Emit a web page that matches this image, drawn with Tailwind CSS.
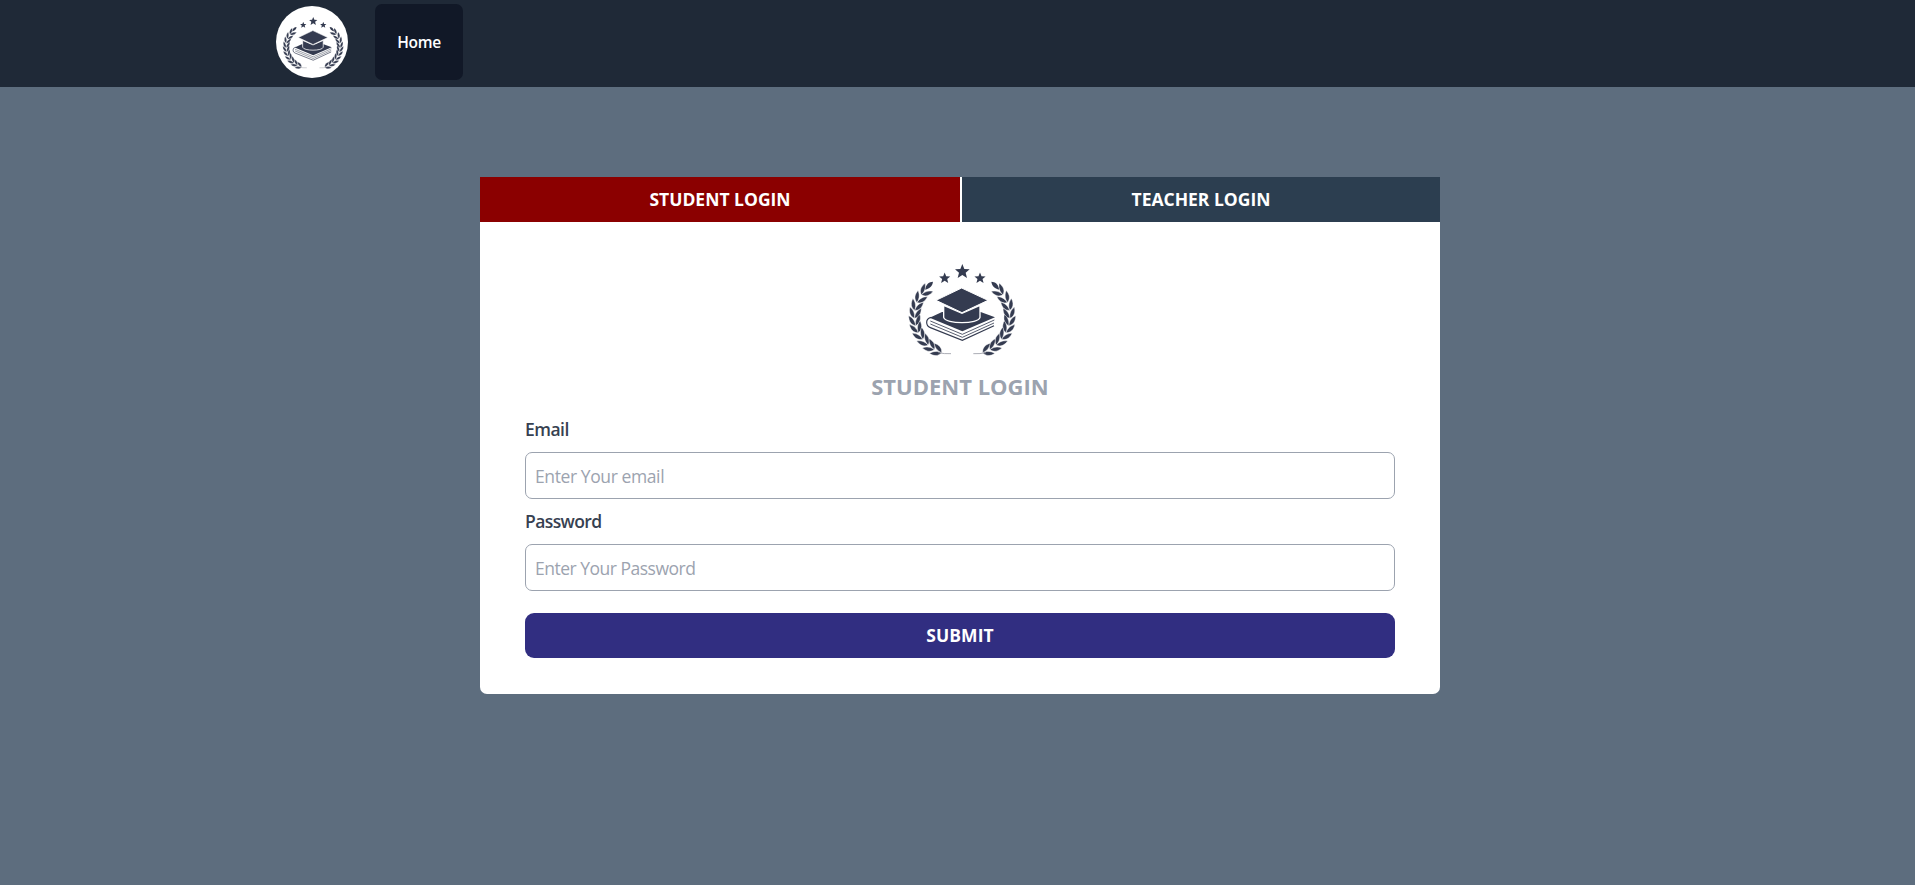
<!DOCTYPE html>
<html lang="en">
<head>
<meta charset="utf-8">
<title>Student Login</title>
<script src="https://cdn.jsdelivr.net/npm/@tailwindcss/browser@4"></script>
</head>
<body class="h-screen overflow-hidden bg-[#5d6d7e] font-['Open_Sans','Noto_Sans',sans-serif] text-[18px] leading-[27px]">
<svg class="hidden">
  <defs>
    <path id="star" d="M0-22 6-7 22-6 10 4 14 20 0 11-14 20-10 4-22-6-6-7Z"/>
    <g id="pair" stroke="#fff" stroke-width="1.2">
      <path d="M0 15C-13 11-19 0-17-17-8-11 0-2 0 15Z"/>
      <path d="M0 15C13 11 19 0 17-17 8-11 0-2 0 15Z"/>
    </g>
    <g id="branch">
      <path d="M0 14C-9-2-6-12 2-20 9-10 9 0 0 14Z" transform="translate(114 109) rotate(42)"/>
      <use href="#pair" transform="translate(105 124) rotate(46)"/>
      <use href="#pair" transform="translate(89 145) rotate(33)"/>
      <use href="#pair" transform="translate(79 167) rotate(19)"/>
      <use href="#pair" transform="translate(75 190) rotate(6)"/>
      <use href="#pair" transform="translate(75 212) rotate(-7)"/>
      <use href="#pair" transform="translate(80 234) rotate(-20)"/>
      <use href="#pair" transform="translate(90 255) rotate(-33)"/>
      <use href="#pair" transform="translate(104 274) rotate(-43)"/>
      <use href="#pair" transform="translate(121 290) rotate(-54)"/>
      <use href="#pair" transform="translate(141 302) rotate(-66)"/>
      <path d="M145 308Q162 312 183 311" fill="none" stroke="#9a9ca6" stroke-width="2.5"/>
    </g>
    <g id="crest" fill="#343b50">
      <use href="#star" transform="translate(217 64)"/>
      <use href="#star" transform="translate(164 84) scale(.76)"/>
      <use href="#star" transform="translate(270 84) scale(.76)"/>
      <use href="#branch"/>
      <use href="#branch" transform="translate(433 0) scale(-1 1)"/>
      <path d="M156 186 119 203 217 244 315 202 272 186Z"/>
      <path d="M124 202Q110 205 110 217 110 229 121 233L217 271 312 227" fill="none" stroke="#343b50" stroke-width="3.5"/>
      <path d="M121 213 217 253 313 210M121 222 217 262 312 219" fill="none" stroke="#343b50" stroke-width="2.5"/>
      <path d="M161 166V202C166 223 266 223 270 202V166L216 190Z" stroke="#fff" stroke-width="4"/>
      <path d="M215 114 294 151 216 188 138 151Z" stroke="#fff" stroke-width="3"/>
    </g>
  </defs>
</svg>
<header class="flex h-[87px] items-start bg-[#1f2937] pl-[276px]">
  <a href="#" class="mt-[6px] block size-[72px] overflow-hidden rounded-full bg-white">
    <svg class="size-full" viewBox="20 -16 381 381"><use href="#crest"/></svg>
  </a>
  <nav class="mt-1 ml-[27px]">
    <a href="#" class="flex h-[76px] w-[88px] items-center justify-center rounded-[7px] bg-[#111827] text-[15.5px] font-semibold tracking-[-0.3px] text-white">Home</a>
  </nav>
</header>
<main class="mt-[90px] ml-[480px] h-[517px] w-[960px] overflow-hidden rounded-b-[7px] bg-white">
  <div class="flex h-[45px] text-center font-bold text-white">
    <button class="w-[480px] bg-[#8b0000] text-[17.5px]">STUDENT LOGIN</button>
    <button class="ml-[2px] flex-1 bg-[#2c3e50] text-[17.5px]">TEACHER LOGIN</button>
  </div>
  <form class="flex flex-col px-[45px] pt-[28px]">
    <svg class="h-[120px] w-[140px] self-center" viewBox="0 0 420 360"><use href="#crest"/></svg>
    <h1 class="-mt-px h-[35px] text-center text-[22px] leading-[34px] font-bold text-[#9ca3af]">STUDENT LOGIN</h1>
    <label for="email" class="mt-[12px] h-[27px] text-[17.5px] font-semibold tracking-[-0.5px] text-[#374151]">Email</label>
    <input id="email" type="email" placeholder="Enter Your email" class="mt-[9px] h-[47px] rounded-[7px] border border-[#9ca3af] px-[9px] text-[17.5px] tracking-[-0.4px] placeholder:text-[#9ca3af]">
    <label for="password" class="mt-[9px] h-[27px] text-[17.5px] font-semibold tracking-[-0.6px] text-[#374151]">Password</label>
    <input id="password" type="password" placeholder="Enter Your Password" class="mt-[9px] h-[47px] rounded-[7px] border border-[#9ca3af] px-[9px] text-[17.5px] tracking-[-0.5px] placeholder:text-[#9ca3af]">
    <button type="button" class="mt-[22px] h-[45px] rounded-[9px] bg-[#312e81] text-[17.5px] font-bold tracking-[0.1px] text-white">SUBMIT</button>
  </form>
</main>
</body>
</html>
